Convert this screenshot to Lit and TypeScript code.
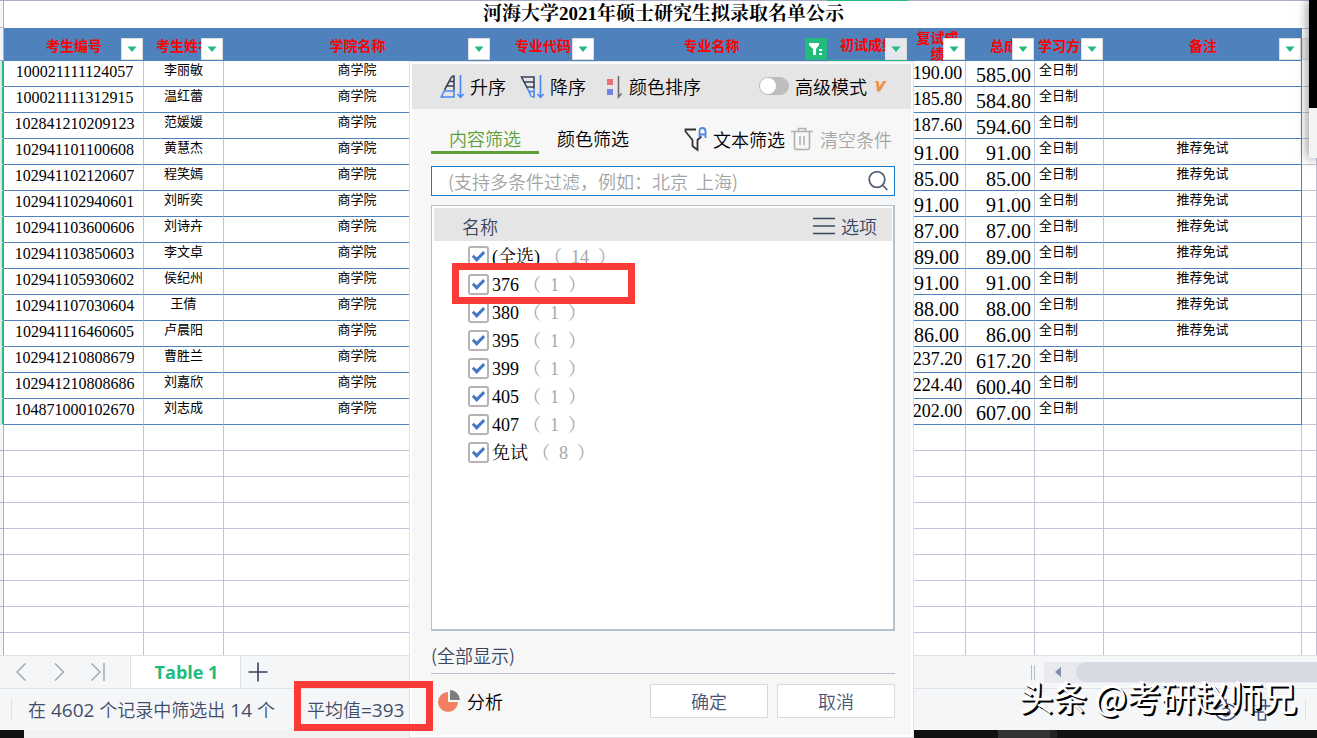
import { LitElement, html, css, nothing } from "lit";
import { customElement, state } from "lit/decorators.js";
import { classMap } from "lit/directives/class-map.js";

interface Row {
  id: string;
  name: string;
  retest: string;
  total: string;
  exempt: boolean;
}

const ROWS: Row[] = [
  { id: "100021111124057", name: "李丽敏", retest: "190.00", total: "585.00", exempt: false },
  { id: "100021111312915", name: "温红蕾", retest: "185.80", total: "584.80", exempt: false },
  { id: "102841210209123", name: "范媛媛", retest: "187.60", total: "594.60", exempt: false },
  { id: "102941101100608", name: "黄慧杰", retest: "91.00", total: "91.00", exempt: true },
  { id: "102941102120607", name: "程笑嫣", retest: "85.00", total: "85.00", exempt: true },
  { id: "102941102940601", name: "刘昕奕", retest: "91.00", total: "91.00", exempt: true },
  { id: "102941103600606", name: "刘诗卉", retest: "87.00", total: "87.00", exempt: true },
  { id: "102941103850603", name: "李文卓", retest: "89.00", total: "89.00", exempt: true },
  { id: "102941105930602", name: "侯纪州", retest: "91.00", total: "91.00", exempt: true },
  { id: "102941107030604", name: "王倩", retest: "88.00", total: "88.00", exempt: true },
  { id: "102941116460605", name: "卢晨阳", retest: "86.00", total: "86.00", exempt: true },
  { id: "102941210808679", name: "曹胜兰", retest: "237.20", total: "617.20", exempt: false },
  { id: "102941210808686", name: "刘嘉欣", retest: "224.40", total: "600.40", exempt: false },
  { id: "104871000102670", name: "刘志成", retest: "202.00", total: "607.00", exempt: false },
];

const HEADERS = [
  { text: "考生编号", cls: "" },
  { text: "考生姓名", cls: "" },
  { text: "学院名称", cls: "" },
  { text: "专业代码", cls: "" },
  { text: "专业名称", cls: "filtered" },
  { text: "初试成绩", cls: "current" },
  { text: "复试成绩", cls: "wrap" },
  { text: "总成绩", cls: "right" },
  { text: "学习方式", cls: "left" },
  { text: "备注", cls: "" },
];

const OPTIONS = [
  { label: "(全选)", count: 14 },
  { label: "376", count: 1 },
  { label: "380", count: 1 },
  { label: "395", count: 1 },
  { label: "399", count: 1 },
  { label: "405", count: 1 },
  { label: "407", count: 1 },
  { label: "免试", count: 8 },
];

@customElement("sheet-grid")
class SheetGrid extends LitElement {
  static styles = css`
    :host { display: block; overflow: hidden; background: #fff; font-family: "Liberation Serif", "Noto Sans CJK SC", serif; color: #000; }
    table { width: 100%; table-layout: fixed; border-collapse: separate; border-spacing: 0; border-top: 1px solid #a9aec8; }
    th, td { box-sizing: border-box; padding: 0; vertical-align: top; white-space: nowrap; font-weight: 400; }
    .gutter { width: 4px; } .c1 { width: 140px; } .c2 { width: 80px; } .c3 { width: 267px; } .c4 { width: 104px; }
    .c5 { width: 233px; } .c6 { width: 80px; } .c7 { width: 58px; } .c8 { width: 69px; } .c9 { width: 69px; } .c10 { width: 198px; }
    .edge { background: #f5f6f8; border-right: 1px solid #a9aec8; border-bottom: 1px solid #a9aec8; }
    .data .edge { background: #dfe6e6; border-right: 2px solid #22bb7c; }
    .title { height: 27px; padding-left: 6px; font: 700 19px/26px "Liberation Serif", "Noto Serif CJK SC", "Noto Sans CJK SC", serif; text-align: center; }
    .head { position: relative; height: 33px; padding-left: 1px; background: #4f81bd; color: #f00; font: 700 14px/16px "Noto Sans CJK SC", sans-serif; text-align: center; vertical-align: middle; border-right: 1px solid #4f81bd; }
    .head.wrap { white-space: normal; padding: 0 5px 0 7px; }
    .head.right { text-align: right; padding-right: 2px; }
    .head.left { text-align: left; padding-left: 3px; }
    .head.current { border-bottom: 1px solid #22bb7c; }
    .head.next { background: #fff; border: 0; border-top: 1px solid #bfc4db; }
    .drop { position: absolute; right: 0; bottom: 1px; width: 22px; height: 22px; box-sizing: border-box; padding: 0; border: 1px solid #ddd; background: #fff; display: grid; place-items: center; }
    .current .drop { background: #e4e8ee; bottom: 0; }
    .filtered .drop { background: #22bb7c; border-color: #22bb7c; }
    .next .drop { right: auto; left: 0; background: #eee; }
    td { height: 26px; border-right: 1px solid #bfc4db; border-bottom: 1px solid #bfc4db; }
    .data td { border-bottom-color: #4f81bd; }
    .data .edge { border-bottom-color: #dfe6e6; }
    .data td.last { border-bottom-color: #bfc4db; }
    .data td.c-note { border-right-color: #4f81bd; }
    .id { padding-left: 2px; font-size: 16px; line-height: 22px; text-align: center; }
    .cn { font: 400 13px/15px "Noto Sans CJK SC", sans-serif; text-align: center; }
    .cn.mode { text-align: left; padding-left: 4px; }
    .num { height: 25px; font-size: 20px; line-height: 28px; text-align: center; }
    .num.small { font-size: 18px; line-height: 25px; padding-left: 2px; }
    .num.total { text-align: right; padding-right: 3px; }
  `;

  private arrow(cls: string) {
    return cls === "filtered"
      ? html`<svg width="18" height="18" viewBox="0 0 18 18"><path d="M2 3h10v2L9 9v6H6V9L2 5z" fill="#fff" /><path d="M12 10h3M12 14h3" stroke="#fff" stroke-width="2" /></svg>`
      : html`<svg width="12" height="8" viewBox="0 0 12 8"><path d="M1.500 1.500h9L6 7z" fill="#22bb7c" /></svg>`;
  }

  render() {
    return html`<table>
      <colgroup>
        <col class="gutter" /><col class="c1" /><col class="c2" /><col class="c3" /><col class="c4" /><col class="c5" />
        <col class="c6" /><col class="c7" /><col class="c8" /><col class="c9" /><col class="c10" /><col />
      </colgroup>
      <thead>
        <tr><td class="edge"></td><th class="title" colspan="11">河海大学2021年硕士研究生拟录取名单公示</th></tr>
        <tr>
          <td class="edge"></td>
          ${HEADERS.map((h) => html`<th scope="col" class="head ${h.cls}">${h.text}<button class="drop" aria-label="筛选${h.text}">${this.arrow(h.cls)}</button></th>`)}
          <th class="head next"><button class="drop" aria-label="筛选">${this.arrow("")}</button></th>
        </tr>
      </thead>
      <tbody>
        ${ROWS.map((r) => html`<tr class="data">
          <td class="edge"></td>
          <td class="id">${r.id}</td>
          <td class="cn">${r.name}</td>
          <td class="cn">商学院</td>
          <td></td><td></td><td></td>
          <td><div class=${classMap({ num: true, small: r.retest.length > 5 })}>${r.retest}</div></td>
          <td><div class="num total">${r.total}</div></td>
          <td class="cn mode">全日制</td>
          <td class="cn c-note">${r.exempt ? "推荐免试" : nothing}</td>
          <td class="last"></td>
        </tr>`)}
        ${Array.from({ length: 9 }, () => html`<tr><td class="edge"></td>${Array.from({ length: 11 }, () => html`<td></td>`)}</tr>`)}
      </tbody>
    </table>`;
  }
}

@customElement("filter-panel")
class FilterPanel extends LitElement {
  @state() private checked: boolean[] = OPTIONS.map(() => true);

  static styles = css`
    :host { display: flex; flex-direction: column; box-sizing: border-box; border: 1px solid #e0e1e6; padding: 2px; background: #fff; font: 350 18px/24px "Noto Sans CJK SC", sans-serif; color: #000; }
    button, input { font: inherit; color: inherit; }
    button { border: 0; background: none; padding: 0; display: flex; align-items: center; white-space: nowrap; }
    svg { flex: none; display: block; }
    .tools { display: flex; align-items: center; height: 45px; box-sizing: border-box; padding: 0 24px 2px 28px; background: #e5e5e5; }
    .tools button { gap: 6px; margin-right: 14px; }
    .tools .color { margin-left: 6px; }
    .advanced { display: flex; align-items: center; gap: 6px; margin-left: auto; }
    .switch { appearance: none; width: 30px; height: 18px; margin: 0; border-radius: 9px; background: #bdbdbd; display: flex; align-items: center; padding: 1px; box-sizing: border-box; }
    .switch::after { content: ""; width: 16px; height: 16px; border-radius: 8px; background: #fff; }
    .switch:checked { justify-content: flex-end; background: #5e9f38; }
    .body { flex: 1; display: flex; flex-direction: column; min-height: 0; padding: 14px 16px 17px 19px; background: #f7f7f7; }
    .tabs { display: flex; align-items: stretch; height: 31px; margin-bottom: 12px; }
    .tab { padding: 2px 18px 0; border-bottom: 3px solid transparent; }
    .tab.active { color: #5e9f38; border-bottom-color: #5e9f38; }
    .tabs .text { gap: 6px; margin-left: auto; }
    .tabs .clear { gap: 7px; margin-left: 6px; margin-right: 3px; color: #a6a6a6; }
    .search { display: flex; align-items: center; height: 30px; flex: none; box-sizing: border-box; border: 1px solid #1a7bcd; background: #fff; padding: 0 5px 0 16px; margin-bottom: 9px; }
    .search input { flex: 1; min-width: 0; border: 0; padding: 0; background: none; outline: none; }
    .search input::placeholder { color: #a3a3a3; opacity: 1; }
    .list { flex: 1; min-height: 0; background: #fff; border: 1px solid #b5c2cd; border-width: 1px 2px 2px 1px; padding: 2px 1px 0 2px; }
    .listhead { display: flex; align-items: center; justify-content: space-between; height: 33px; box-sizing: border-box; padding: 2px 15px 0 28px; background: #e5e5e5; color: #3a4660; }
    .listhead button { gap: 6px; }
    ul { list-style: none; margin: 0; padding: 0 0 0 34px; }
    li { height: 28px; }
    label.opt { display: inline-flex; align-items: center; height: 28px; gap: 3px; font: 400 18px/28px "Liberation Serif", "Noto Serif CJK SC", "Noto Sans CJK SC", serif; }
    .box { appearance: none; width: 21px; height: 21px; margin: 0; box-sizing: border-box; border: 2px solid #b4b4b4; border-radius: 3px; background: #fff; display: grid; place-items: center; }
    .box:checked::after { content: ""; width: 4px; height: 9px; margin-top: -3px; border: solid #4577c4; border-width: 0 3px 3px 0; transform: rotate(45deg); }
    .count { margin-left: 4px; color: #a6a6a6; white-space: pre; }
    .summary { flex: none; padding: 12px 0 6px; border-bottom: 1px solid #b5c2cd; color: #3a4660; }
    .actions { display: flex; align-items: center; gap: 9px; padding-top: 10px; }
    .analyse { gap: 6px; margin-left: 7px; margin-right: auto; }
    .act { width: 118px; height: 34px; justify-content: center; background: #fff; border: 1px solid #d8d9e0; border-radius: 1px; color: #465678; }
  `;

  private toggle(i: number) {
    this.checked = this.checked.map((c, j) => (i === 0 ? !this.checked[0] : i === j ? !c : c));
  }

  render() {
    return html`
      <div class="tools">
        <button><svg width="24" height="26" viewBox="0 0 24 26" fill="none" stroke-width="1.600"><path d="M4.500 17 11 5Q12 3 14 3v14M9.500 8.500H14M6.500 13H14" stroke="#36435b" /><path d="M4.500 17.500 1.300 24H14v-7M4.500 18H14" stroke="#4b86f5" /><path d="M20.500 2v22M17.500 21l3 3.300 3-3.300" stroke="#4b86f5" /></svg>升序</button>
        <button><svg width="24" height="26" viewBox="0 0 24 26" fill="none" stroke-width="1.600"><path d="M7.500 15.500 1.500 4H14v12M4 9h10M6.500 14H14" stroke="#36435b" /><path d="M7.500 15.500 11 23q.5 1 3 1v-9M9 18.500h5" stroke="#4b86f5" /><path d="M20.500 2v22M17.500 21l3 3.300 3-3.300" stroke="#4b86f5" /></svg>降序</button>
        <button class="color"><svg width="17" height="26" viewBox="0 0 17 26"><rect x="1" y="6" width="6" height="6" fill="#ec7070" /><rect x="1" y="16" width="6" height="6" fill="#7484e8" /><path d="M12.500 3v21l3-3.500" fill="none" stroke="#6d6d6d" stroke-width="1.600" /></svg>颜色排序</button>
        <label class="advanced"><input type="checkbox" role="switch" class="switch" />高级模式<svg width="14" height="14" viewBox="0 0 14 14"><path d="M1.500 2h4.200l.6 6L10 2h3.500L7 12.500H4L3 3.500z" fill="#f28f4c" /></svg></label>
      </div>
      <div class="body">
        <div class="tabs">
          <button class="tab active">内容筛选</button>
          <button class="tab">颜色筛选</button>
          <button class="text"><svg width="24" height="26" viewBox="0 0 24 26" fill="none" stroke-width="1.800"><path d="M13 3.500H2.500v2L9.500 14v6l5 4V14l4-3.500" stroke="#333" /><path d="M16.500 12V5.500Q16.500 2 19.500 2t3 3.500V12M16.500 8.500h6" stroke="#4d86dc" /></svg>文本筛选</button>
          <button class="clear"><svg width="22" height="26" viewBox="0 0 22 26" fill="none" stroke="#b0b0b0" stroke-width="1.600"><path d="M0 5.500h22M7.500 5V2.500h7V5M3.500 6v15.500q0 2 2 2h11q2 0 2-2V6M9 10v9M13 10v9" /></svg>清空条件</button>
        </div>
        <div class="search">
          <input type="text" aria-label="搜索" placeholder="(支持多条件过滤，例如：北京  上海)" />
          <svg width="22" height="22" viewBox="0 0 22 22" fill="none" stroke="#566178" stroke-width="1.800"><circle cx="10" cy="9.500" r="7.800" /><path d="m15.500 15 4.800 5" /></svg>
        </div>
        <div class="list">
          <div class="listhead">
            <span>名称</span>
            <button><svg width="22" height="18" viewBox="0 0 22 18" stroke="#3a4660" stroke-width="1.600"><path d="M0 1.500h22M0 9h22M0 16.500h22" /></svg>选项</button>
          </div>
          <ul>
            ${OPTIONS.map((o, i) => html`<li><label class="opt">
              <input type="checkbox" class="box" .checked=${this.checked[i]} @change=${() => this.toggle(i)} />
              <span>${o.label}<span class="count">（  ${o.count}  ）</span></span>
            </label></li>`)}
          </ul>
        </div>
        <div class="summary">(全部显示)</div>
        <div class="actions">
          <button class="analyse"><svg width="23" height="24" viewBox="0 0 23 24"><path d="M10 3a10 10 0 1 0 10 10H10z" fill="#f37f62" /><path d="M12 1a10.500 10.500 0 0 1 10 10H12z" fill="#7d7d7d" /></svg>分析</button>
          <button class="act">确定</button>
          <button class="act">取消</button>
        </div>
      </div>`;
  }
}

@customElement("app-root")
class AppRoot extends LitElement {
  static styles = css`
    :host { display: grid; grid-template-rows: minmax(0, 1fr) auto auto auto; position: relative; height: 100vh; overflow: hidden; background: #f5f6f8; font: 400 18px/24px "Open Sans", "Noto Sans CJK SC", sans-serif; color: #3f4d68; }
    button { border: 0; background: none; padding: 0; font: inherit; color: inherit; }
    svg { display: block; }
    .tabbar { display: flex; align-items: stretch; height: 33px; box-sizing: border-box; border-top: 1px solid #dfe1e8; }
    .nav { display: flex; align-items: center; gap: 26px; width: 131px; box-sizing: border-box; padding-left: 15px; border-right: 1px solid #dfe1e8; }
    .sheet { width: 110px; padding-left: 2px; background: #fff; color: #22bb7c; font-weight: 700; border-right: 1px solid #dfe1e8; }
    .add { margin-left: 7px; }
    .hscroll { display: flex; align-items: center; gap: 9px; width: 286px; margin-left: auto; }
    .grip { width: 2px; height: 15px; border: solid #b3bccf; border-width: 0 1px; }
    .track { flex: 1; display: flex; align-items: center; height: 21px; gap: 15px; padding-left: 11px; background: #e8eaf0; }
    .thumb { flex: 1; height: 20px; border-radius: 10px 0 0 10px; background: #d7dae2; }
    .status { display: flex; align-items: center; height: 42px; box-sizing: border-box; border-top: 1px solid #dfe1e8; padding-left: 11px; white-space: nowrap; font-family: "Noto Sans CJK SC", sans-serif; font-weight: 350; }
    .figure { font: 400 19px/24px "Open Sans", sans-serif; }
    .sep { width: 1px; height: 22px; background: #dfe1e8; }
    .found { margin-left: 16px; }
    .avg { margin-left: 32px; }
    .views { display: flex; align-items: center; gap: 14px; margin-left: auto; padding-right: 11px; }
    .views .sep { margin-left: 18px; }
    .taskbar { display: grid; grid-template-columns: 24px 974px 52px 7px 1fr; height: 8px; background: #111; }
    .window { grid-column: 2; background: linear-gradient(90deg, #f2f2f2 400px, #111 400px); }
    .item { background: #333; } .item.thin { background: #222; }
    .panel { position: absolute; left: 409px; top: 61px; bottom: 0; width: 505px; }
    .mark { position: absolute; box-sizing: border-box; border: 7px solid #fc3a38; }
    .mark.option { left: 452px; top: 263px; width: 183px; height: 41px; }
    .mark.average { left: 294px; bottom: 7px; width: 139px; height: 50px; }
    .colmark { position: absolute; left: 827px; top: 0; width: 81px; height: 1px; background: #22bb7c; }
    .side { position: absolute; right: 0; top: 0; width: 8px; height: 158px; background: linear-gradient(#000 108px, #f2f3f5 108px); box-shadow: 0 0 12px #0009; }
    .watermark { position: absolute; right: 20px; bottom: 19px; font: 400 34px/44px "Noto Sans CJK SC", sans-serif; color: #fff; white-space: nowrap; text-shadow: 1px 1px 0 #000, 2px 2px 0 #000, -1px -1px 1px #fff; }
  `;

  render() {
    return html`
      <sheet-grid></sheet-grid>
      <div class="tabbar">
        <div class="nav">
          <button aria-label="上一张"><svg width="12" height="20" viewBox="0 0 12 20" fill="none" stroke="#a5a8b0" stroke-width="1.500"><path d="M10.500 1.500 2 10l8.500 8.500" /></svg></button>
          <button aria-label="下一张"><svg width="12" height="20" viewBox="0 0 12 20" fill="none" stroke="#a5a8b0" stroke-width="1.500"><path d="M2 1.500 10.500 10 2 18.500" /></svg></button>
          <button aria-label="最后一张"><svg width="15" height="20" viewBox="0 0 15 20" fill="none" stroke="#a5a8b0" stroke-width="1.500"><path d="M.5 1.500 9 10 .5 18.500M13 1v18" /></svg></button>
        </div>
        <button class="sheet">Table 1</button>
        <button class="add" aria-label="新建工作表"><svg width="20" height="20" viewBox="0 0 20 20" stroke="#36435b" stroke-width="1.600"><path d="M10 .5v19M.5 10h19" /></svg></button>
        <div class="hscroll">
          <div class="grip"></div>
          <div class="track"><svg width="6" height="10" viewBox="0 0 6 10"><path d="M6 0v10L0 5z" fill="#7f8dab" /></svg><div class="thumb"></div></div>
        </div>
      </div>
      <div class="status">
        <div class="sep"></div>
        <span class="found">在<span class="figure"> 4602 </span>个记录中筛选出<span class="figure"> 14 </span>个</span>
        <span class="avg">平均值<span class="figure">=393</span></span>
        <div class="views">
          <svg width="22" height="24" viewBox="0 0 22 24" fill="none" stroke="#3f4d70" stroke-width="1.500"><path d="M1 14a10 8 0 0 1 20 0 10 8 0 0 1-20 0zM11 1v4" /><circle cx="11" cy="14" r="4" /></svg>
          <svg width="22" height="22" viewBox="0 0 22 22" fill="none" stroke="#3f4d70" stroke-width="1.500"><path d="M1 7h20v6H1zM7.500 1h7v20h-7z" /></svg>
          <div class="sep"></div>
        </div>
      </div>
      <div class="taskbar"><div class="window"></div><div class="item"></div><div class="item thin"></div></div>
      <div class="colmark"></div>
      <filter-panel class="panel"></filter-panel>
      <div class="mark option"></div>
      <div class="mark average"></div>
      <div class="side"></div>
      <div class="watermark">头条 @考研赵师兄</div>`;
  }
}
